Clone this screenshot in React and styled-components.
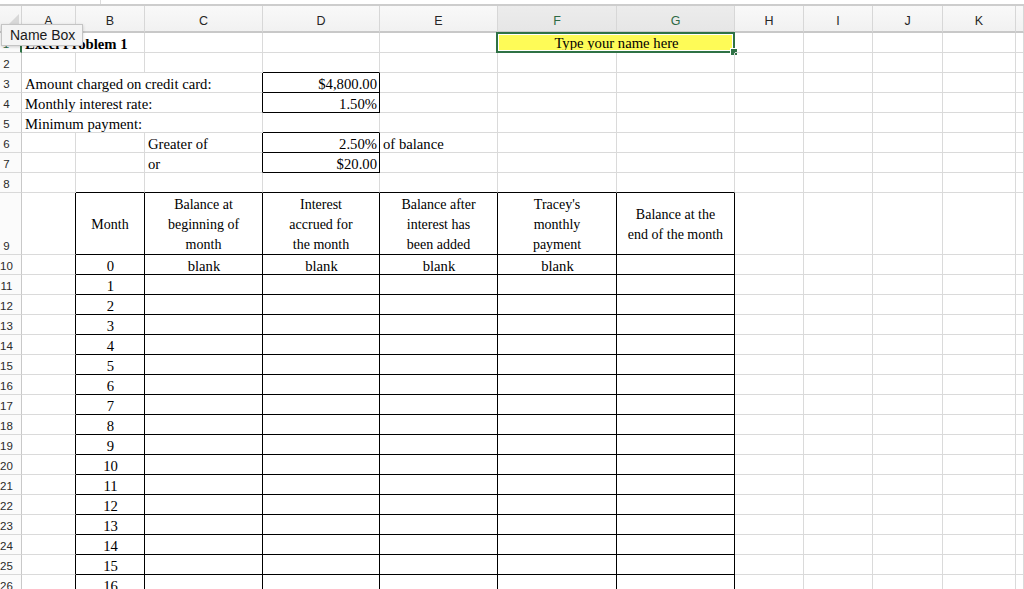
import React from "react";
import styled, { createGlobalStyle, css } from "styled-components";

const COLS = ["A", "B", "C", "D", "E", "F", "G", "H", "I", "J", "K", "L"];
const WIDTHS = "22px 54px 69px 118px 117px 118px 119px 118px 69px 69px 70px 73px 1fr";
const SELECTED_COLS = ["F", "G"];

const HEADERS = [
  "Month",
  ["Balance at", "beginning of", "month"],
  ["Interest", "accrued for", "the month"],
  ["Balance after", "interest has", "been added"],
  ["Tracey's", "monthly", "payment"],
  ["Balance at the", "end of the month"],
];

// cells keyed by row -> list of { col, span, text, align, bold }
const cells = {
  1: [
    { col: "A", span: 2, text: "Excel Problem 1", bold: true },
    { col: "F", span: 2, text: "Type your name here", align: "center", selected: true },
  ],
  3: [
    { col: "A", span: 3, text: "Amount charged on credit card:" },
    { col: "D", text: "$4,800.00", align: "right" },
  ],
  4: [
    { col: "A", span: 3, text: "Monthly interest rate:" },
    { col: "D", text: "1.50%", align: "right" },
  ],
  5: [{ col: "A", span: 3, text: "Minimum payment:" }],
  6: [
    { col: "C", text: "Greater of" },
    { col: "D", text: "2.50%", align: "right" },
    { col: "E", text: "of balance" },
  ],
  7: [
    { col: "C", text: "or" },
    { col: "D", text: "$20.00", align: "right" },
  ],
  9: ["B", "C", "D", "E", "F", "G"].map((col, i) => ({
    col,
    text: HEADERS[i],
    align: "center",
    header: true,
  })),
  10: [
    { col: "B", text: "0", align: "center" },
    { col: "C", text: "blank", align: "center" },
    { col: "D", text: "blank", align: "center" },
    { col: "E", text: "blank", align: "center" },
    { col: "F", text: "blank", align: "center" },
  ],
};

for (let r = 11; r <= 26; r++) {
  cells[r] = [{ col: "B", text: String(r - 10), align: "center" }];
}

const ROWS = Array.from({ length: 26 }, (_, i) => i + 1);

const isBoxed = (r, c) => {
  if (c === "D" && [3, 4, 6, 7].includes(r)) return true;
  const ci = COLS.indexOf(c);
  return r >= 9 && ci >= 1 && ci <= 6;
};

const GlobalStyle = createGlobalStyle`
  html, body {
    margin: 0;
    padding: 0;
    background: #fff;
    overflow: hidden;
  }
  body {
    font-family: "Liberation Serif", "Times New Roman", serif;
  }
`;

const Page = styled.div`
  position: relative;
  width: 1024px;
  height: 589px;
  overflow: hidden;
  background: #fff;
`;

const TopStrip = styled.div`
  height: 4px;
  border-bottom: 2px solid #cdcdcd;
  display: flex;
  box-sizing: content-box;
`;

const StripTick = styled.div`
  width: 100px;
  border-right: 1px solid #dcdcdc;
`;

const Sheet = styled.div`
  display: grid;
  grid-template-columns: ${WIDTHS};
  grid-template-rows: 27px repeat(8, 20px) 62px repeat(17, 20px);
`;

const Corner = styled.div`
  position: relative;
  box-sizing: border-box;
  background: linear-gradient(#f8f8f8, #f0f0f0);
  border-right: 1px solid #d4d4d4;
  border-bottom: 2px solid #c8c8c8;

  &::after {
    content: "";
    position: absolute;
    right: 2px;
    bottom: 2px;
    border-style: solid;
    border-width: 0 0 15px 15px;
    border-color: transparent transparent #d8d8d8 transparent;
  }
`;

const ColHead = styled.div`
  box-sizing: border-box;
  display: flex;
  align-items: center;
  justify-content: center;
  font-family: "Liberation Sans", Arial, sans-serif;
  font-size: 12.5px;
  color: ${(p) => (p.$selected ? "#2d6a45" : "#262626")};
  background: ${(p) =>
    p.$selected ? "linear-gradient(#ececec, #e6e6e6)" : "linear-gradient(#f9f9f9, #f1f1f1)"};
  border-right: 1px solid #d7d7d7;
  border-bottom: 2px solid #c8c8c8;
  padding-top: 4px;
`;

const RowHead = styled.div`
  box-sizing: border-box;
  display: flex;
  align-items: flex-end;
  justify-content: center;
  padding: 0 8px 0 0;
  line-height: 15px;
  font-family: "Liberation Sans", Arial, sans-serif;
  font-size: 11.5px;
  color: ${(p) => (p.$selected ? "#2d6a45" : "#2a2a2a")};
  background: #fbfbfb;
  border-bottom: 1px solid #d9d9d9;
  border-right: ${(p) => (p.$selected ? "2px solid #2f7245" : "1px solid #c9c9c9")};
`;

const Cell = styled.div`
  position: relative;
  box-sizing: border-box;
  display: flex;
  align-items: flex-end;
  justify-content: ${(p) =>
    p.$align === "center" ? "center" : p.$align === "right" ? "flex-end" : "flex-start"};
  padding: 0 2px 0 3px;
  grid-column: span ${(p) => p.$span || 1};
  font-size: 14.7px;
  line-height: 15px;
  font-weight: ${(p) => (p.$bold ? 700 : 400)};
  color: #000;
  white-space: nowrap;
  border-right: 1px solid ${(p) => (p.$blackRight ? "#000" : "#dadada")};
  border-bottom: 1px solid ${(p) => (p.$blackBottom ? "#000" : "#dadada")};
  background: ${(p) => (p.$fill ? p.$fill : "transparent")};

  ${(p) =>
    p.$header &&
    css`
      align-items: center;
      text-align: center;
      font-size: 14px;
      line-height: 20px;
      padding: 3px 2px 0;
    `}

  ${(p) =>
    p.$fill &&
    css`
      align-items: center;
      line-height: 17px;
      padding-top: 2px;
    `}
`;

const HeaderText = styled.div`
  display: flex;
  flex-direction: column;
  align-items: center;
`;

const Selection = styled.div`
  position: absolute;
  left: -2px;
  top: -1px;
  right: -1px;
  bottom: -1px;
  border: 2px solid #2f7245;
  box-shadow: inset 0 0 0 1px #fff;
  pointer-events: none;
`;

const Handle = styled.div`
  position: absolute;
  right: -5px;
  bottom: -5px;
  width: 6px;
  height: 6px;
  background: #2f7245;
  border: 1px solid #fff;
`;

const NameBoxTip = styled.div`
  position: absolute;
  left: 1px;
  top: 24px;
  width: 82px;
  height: 22px;
  box-sizing: border-box;
  display: flex;
  align-items: center;
  padding-left: 8px;
  font-family: "Liberation Sans", Arial, sans-serif;
  font-size: 14px;
  color: #1a1a1a;
  background: #f4f4f4;
  border: 1px solid #c4c4c4;
  box-shadow: 0 1px 3px rgba(0, 0, 0, 0.18);
`;

function renderRow(r) {
  const list = cells[r] || [];
  const out = [];
  let ci = 0;
  while (ci < COLS.length) {
    const col = COLS[ci];
    const def = list.find((d) => d.col === col);
    const span = def?.span || 1;
    const lastCol = COLS[ci + span - 1];
    const nextCol = COLS[ci + span];
    const blackRight = isBoxed(r, lastCol) || (nextCol && isBoxed(r, nextCol));
    const blackBottom = isBoxed(r, col) || isBoxed(r + 1, col);
    const text = def?.text;
    out.push(
      <Cell
        key={`${r}-${col}`}
        $span={span}
        $align={def?.align}
        $bold={def?.bold}
        $header={def?.header}
        $fill={def?.selected ? "#fefb57" : undefined}
        $blackRight={blackRight}
        $blackBottom={blackBottom}
      >
        {Array.isArray(text) ? (
          <HeaderText>
            {text.map((line) => (
              <span key={line}>{line}</span>
            ))}
          </HeaderText>
        ) : (
          text
        )}
        {def?.selected && (
          <Selection>
            <Handle />
          </Selection>
        )}
      </Cell>
    );
    ci += span;
  }
  return out;
}

export default function App() {
  return (
    <Page>
      <GlobalStyle />
      <TopStrip>
        <StripTick />
      </TopStrip>
      <Sheet>
        <Corner />
        {COLS.map((c) => (
          <ColHead key={c} $selected={SELECTED_COLS.includes(c)}>
            {c === "L" ? "" : c}
          </ColHead>
        ))}
        {ROWS.map((r) => (
          <React.Fragment key={r}>
            <RowHead $selected={r === 1}>{r}</RowHead>
            {renderRow(r)}
          </React.Fragment>
        ))}
      </Sheet>
      <NameBoxTip>Name Box</NameBoxTip>
    </Page>
  );
}
